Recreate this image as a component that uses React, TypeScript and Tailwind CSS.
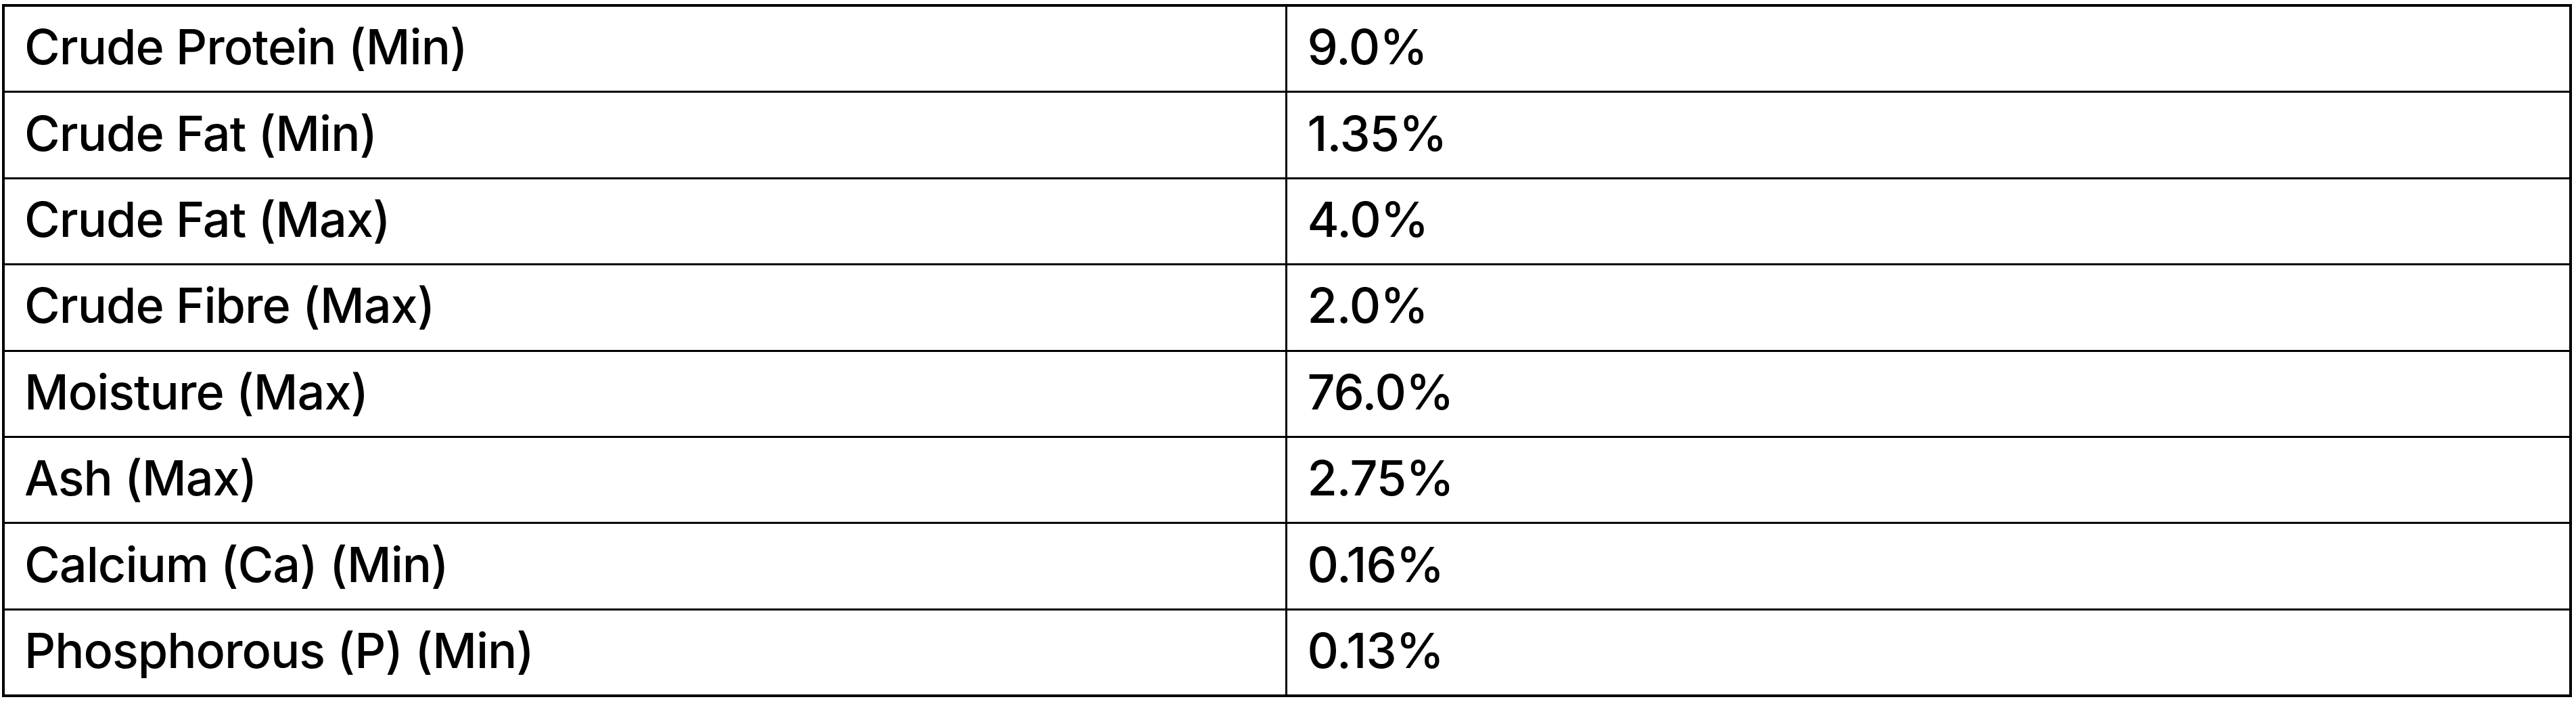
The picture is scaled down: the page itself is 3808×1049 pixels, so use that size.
const rows: [string, string][] = [
  ['Crude Protein (Min)', '9.0%'],
  ['Crude Fat (Min)', '1.35%'],
  ['Crude Fat (Max)', '4.0%'],
  ['Crude Fibre (Max)', '2.0%'],
  ['Moisture (Max)', '76.0%'],
  ['Ash (Max)', '2.75%'],
  ['Calcium (Ca) (Min)', '0.16%'],
  ['Phosphorous (P) (Min)', '0.13%'],
];

export default function App() {
  return (
    <div className="min-h-screen bg-white pt-[6px] pl-[3px] text-black font-['Inter','Noto_Sans',sans-serif] font-[450]">
      <div className="w-[3799px] border-[4px] border-black">
        {rows.map(([label, value], i) => (
          <div
            key={label}
            className={
              i > 0
                ? 'grid grid-cols-2 h-[127.4px] border-t-[3px] border-black'
                : 'grid grid-cols-2 h-[124.4px]'
            }
          >
            <div className="flex items-center pl-[29px] pb-[6px] border-r-[3px] border-black text-[72px] leading-none tracking-[-1px]">
              {label}
            </div>
            <div className="flex items-center pl-[30px] pb-[6px] text-[72px] leading-none tracking-[-1px]">
              {value}
            </div>
          </div>
        ))}
      </div>
    </div>
  );
}
